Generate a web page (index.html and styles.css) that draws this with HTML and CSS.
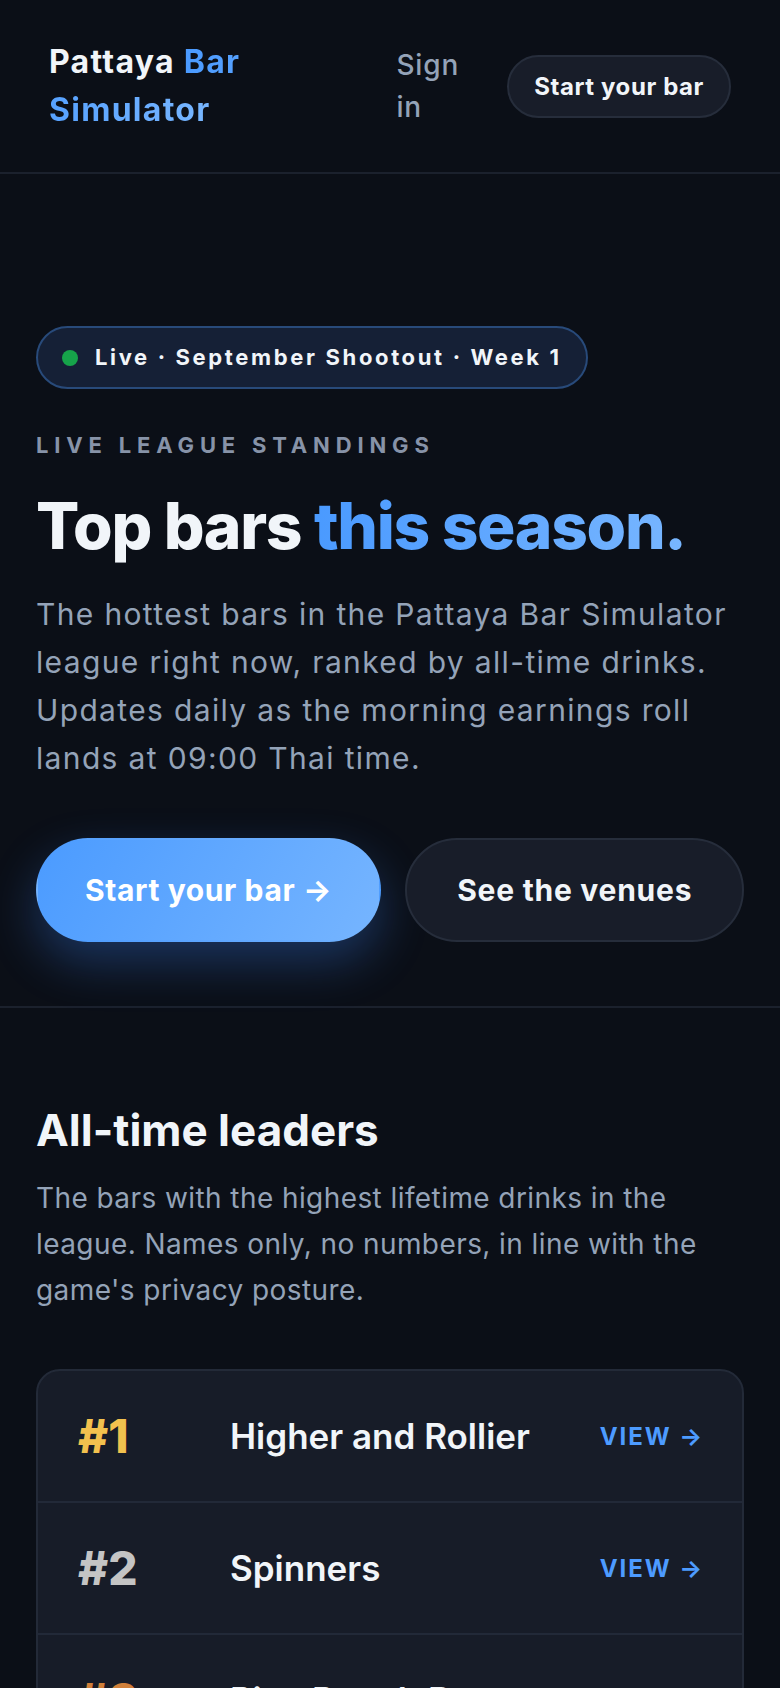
FILE: index.html
```html
<!DOCTYPE html>
<html lang="en">
<head>
    <meta charset="UTF-8">
    <meta name="viewport" content="width=device-width, initial-scale=1.0">
    <title>Pattaya Bar Simulator - Leaderboard</title>
    <link rel="stylesheet" href="styles.css">
</head>
<body>
    <header class="site-header">
        <a class="logo" href="#">Pattaya <span class="accent">Bar Simulator</span></a>
        <nav class="nav">
            <a class="nav-link" href="#">Sign in</a>
            <a class="btn-small" href="#">Start your bar</a>
        </nav>
    </header>

    <section class="hero">
        <div class="badge"><span class="dot"></span>Live · September Shootout · Week 1</div>
        <div class="eyebrow">Live league standings</div>
        <h1>Top bars <span class="accent">this season.</span></h1>
        <p class="lead">The hottest bars in the Pattaya Bar Simulator league right now, ranked by all-time drinks. Updates daily as the morning earnings roll lands at 09:00 Thai time.</p>
        <div class="actions">
            <a class="btn btn-primary" href="#">Start your bar →</a>
            <a class="btn btn-ghost" href="#">See the venues</a>
        </div>
    </section>

    <section class="leaders">
        <h2>All-time leaders</h2>
        <p class="section-desc">The bars with the highest lifetime drinks in the league. Names only, no numbers, in line with the game's privacy posture.</p>

        <div class="board">
            <div class="row">
                <span class="rank gold">#1</span>
                <span class="name">Higher and Rollier</span>
                <a class="view" href="#">View →</a>
            </div>
            <div class="row">
                <span class="rank silver">#2</span>
                <span class="name">Spinners</span>
                <a class="view" href="#">View →</a>
            </div>
            <div class="row">
                <span class="rank bronze">#3</span>
                <span class="name">Pina Punch Bar</span>
                <a class="view" href="#">View →</a>
            </div>
        </div>
    </section>
</body>
</html>
```

FILE: styles.css
```css
* {
    box-sizing: border-box;
}
body {
    margin: 0;
    background: #0b0f17;
    color: #f1f5f9;
    font-family: Inter, "Noto Sans", sans-serif;
}
a {
    text-decoration: none;
    color: inherit;
}
.accent {
    background: linear-gradient(90deg, #4a9aff 0%, #78b6ff 100%);
    -webkit-background-clip: text;
    background-clip: text;
    color: transparent;
}

/* header */
.site-header {
    display: flex;
    justify-content: space-between;
    align-items: center;
    padding: 38px 49px;
    border-bottom: 2px solid #1b212d;
}
.logo {
    max-width: 250px;
    font-size: 32px;
    line-height: 48px;
    font-weight: 700;
    letter-spacing: 0.04em;
}
.nav {
    display: flex;
    align-items: center;
    gap: 48px;
}
.nav-link {
    width: min-content;
    font-size: 28px;
    line-height: 42px;
    font-weight: 500;
    letter-spacing: 0.03em;
    color: #94a3b8;
}
.btn-small {
    white-space: nowrap;
    padding: 13px 25px;
    font-size: 24px;
    line-height: 33px;
    font-weight: 700;
    letter-spacing: 0.025em;
    background: #181d29;
    border: 2px solid #262d3b;
    border-radius: 999px;
}

/* hero */
.hero {
    padding: 152px 36px 64px;
    border-bottom: 2px solid #1b212d;
}
.badge {
    display: inline-flex;
    align-items: center;
    gap: 17px;
    padding: 13px 24px;
    font-size: 22px;
    line-height: 33px;
    font-weight: 700;
    letter-spacing: 0.12em;
    background: #152036;
    border: 2px solid #284a7a;
    border-radius: 999px;
}
.dot {
    width: 16px;
    height: 16px;
    border-radius: 50%;
    background: #16a34a;
}
.eyebrow {
    margin-top: 40px;
    font-size: 22px;
    line-height: 33px;
    font-weight: 700;
    letter-spacing: 0.265em;
    text-transform: uppercase;
    color: #8793a8;
}
h1 {
    margin: 29px 0 0;
    font-size: 64px;
    line-height: 1.1;
    font-weight: 800;
    letter-spacing: -0.02em;
}
.lead {
    margin: 29px 0 0;
    font-size: 30px;
    line-height: 48px;
    letter-spacing: 0.045em;
    color: #94a3b8;
}
.actions {
    display: flex;
    gap: 24px;
    margin-top: 56px;
}
.btn {
    flex: none;
    white-space: nowrap;
    padding: 26px 47px;
    font-size: 30px;
    line-height: 48px;
    font-weight: 700;
    letter-spacing: 0.02em;
    border-radius: 999px;
    border: 2px solid transparent;
}
.btn-primary {
    background: linear-gradient(120deg, #4b9bff 0%, #76b5ff 100%);
    box-shadow: 0 20px 48px rgba(59, 130, 246, 0.32);
    color: #fff;
}
.btn-ghost {
    padding: 26px 50px;
    background: #181d29;
    border-color: #262d3b;
    letter-spacing: 0.025em;
}

/* leaders */
.leaders {
    padding: 96px 36px 80px;
}
h2 {
    margin: 0;
    font-size: 44px;
    line-height: 1.2;
    font-weight: 700;
    letter-spacing: 0;
}
.section-desc {
    margin: 18px 0 0;
    font-size: 28px;
    line-height: 46px;
    letter-spacing: 0.015em;
    color: #94a3b8;
}
.board {
    margin-top: 56px;
    background: #171c28;
    border: 2px solid #232a38;
    border-radius: 24px;
    overflow: hidden;
}
.row {
    display: grid;
    grid-template-columns: 120px 1fr auto;
    gap: 32px;
    align-items: center;
    padding: 40px 38px 40px 40px;
}
.row + .row {
    border-top: 2px solid #222938;
}
.rank {
    font-size: 46px;
    line-height: 50px;
    font-weight: 800;
}
.gold { color: #f2c14e; }
.silver { color: #c4c4c4; }
.bronze { color: #d0803a; }
.name {
    font-size: 35px;
    font-weight: 600;
}
.view {
    font-size: 24px;
    font-weight: 700;
    letter-spacing: 0.08em;
    text-transform: uppercase;
    color: #4d9bff;
}
```
